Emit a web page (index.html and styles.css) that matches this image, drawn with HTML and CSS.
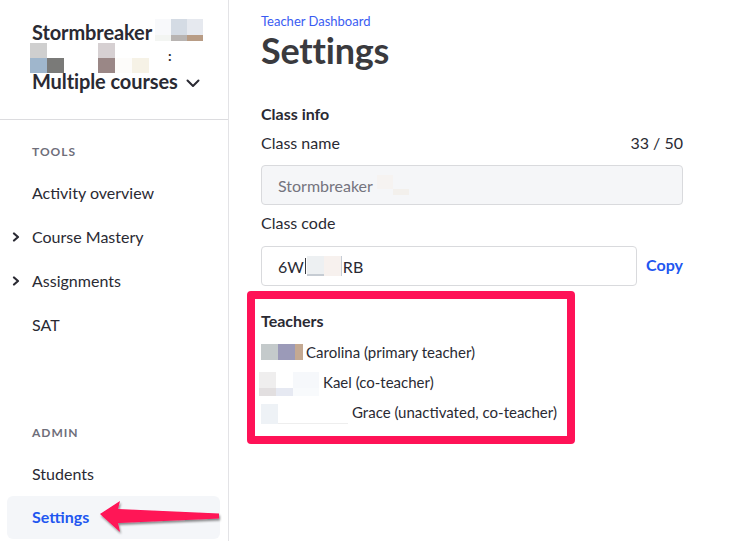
FILE: index.html
```html
<!DOCTYPE html>
<html>
<head>
<meta charset="utf-8">
<link rel="stylesheet" href="styles.css">
</head>
<body>
<div class="app">
  <aside class="sidebar">
    <div class="class-head">
      <div class="line line1">
        <span class="cname">Stormbreaker</span>
        <span class="mosaic m1">
          <i style="background:#f8f9fb"></i><i style="background:#d4dbe4"></i><i style="background:#e6e9ef"></i>
          <i class="s" style="background:#f3f5f2"></i><i class="s" style="background:#b8b4b2"></i><i class="s" style="background:#b89c85"></i>
        </span>
      </div>
      <div class="line line2">
        <span class="mosaic m2">
          <i style="background:#cfcfcf"></i><i></i><i></i><i></i><i style="background:#d6d0d2"></i><i></i><i></i>
          <i style="background:#9fb6cc"></i><i style="background:#7a7a78"></i><i></i><i></i><i style="background:#9a8786"></i><i style="background:#fdfcfa"></i><i style="background:#f6f2e6"></i>
        </span>
        <span class="colon">:</span>
      </div>
      <div class="line line3">
        <span class="cname">Multiple courses</span>
        <svg class="chev" width="14" height="9" viewBox="0 0 14 9"><path d="M1.5 1.5 L7 7 L12.5 1.5" fill="none" stroke="#2a2a33" stroke-width="2" stroke-linecap="round" stroke-linejoin="round"/></svg>
      </div>
    </div>
    <nav class="nav">
      <div class="section-label">TOOLS</div>
      <div class="nav-item">Activity overview</div>
      <div class="nav-item"><svg class="caret" width="8" height="10" viewBox="0 0 8 10"><path d="M2 1.5 L6 5 L2 8.5" fill="none" stroke="#2a2a33" stroke-width="2.2" stroke-linecap="round" stroke-linejoin="round"/></svg>Course Mastery</div>
      <div class="nav-item"><svg class="caret" width="8" height="10" viewBox="0 0 8 10"><path d="M2 1.5 L6 5 L2 8.5" fill="none" stroke="#2a2a33" stroke-width="2.2" stroke-linecap="round" stroke-linejoin="round"/></svg>Assignments</div>
      <div class="nav-item">SAT</div>
      <div class="spacer"></div>
      <div class="section-label">ADMIN</div>
      <div class="nav-item">Students</div>
      <div class="nav-item active">Settings</div>
    </nav>
    <svg class="arrow" width="130" height="44" viewBox="0 0 130 44">
      <defs>
        <filter id="sh" x="-20%" y="-50%" width="140%" height="200%">
          <feDropShadow dx="1" dy="2" stdDeviation="1.3" flood-color="#000" flood-opacity="0.45"/>
        </filter>
      </defs>
      <path d="M2 17 L22 4 L20 12 L121 16.5 L121 21.5 L20 26 L22 35 Z" fill="#ff1257" filter="url(#sh)"/>
    </svg>
  </aside>
  <main class="main">
    <a class="crumb">Teacher Dashboard</a>
    <h1 class="title">Settings</h1>
    <h2 class="sub">Class info</h2>
    <div class="field-row">
      <span>Class name</span><span>33 / 50</span>
    </div>
    <div class="input disabled">Stormbreaker <span class="blur b1"></span></div>
    <div class="label">Class code</div>
    <div class="code-row">
      <div class="input code">6W<span class="bar"></span><span class="blur b2"></span><span class="bar"></span>RB</div>
      <span class="copy">Copy</span>
    </div>
    <section class="teachers">
      <h3>Teachers</h3>
      <div class="t-row"><span class="mosaic t1"><i style="background:#c4cacb"></i><i style="background:#9b9ab8"></i><i class="n" style="background:#c4a992"></i></span>Carolina (primary teacher)</div>
      <div class="t-row"><span class="mosaic t2"><i style="background:#efeeee"></i><i></i><i style="background:#f6f8fb"></i><i style="background:#e2dfe0"></i><i style="background:#e6e9f2"></i><i style="background:#f8fafc"></i></span>Kael (co-teacher)</div>
      <div class="t-row"><span class="mosaic t3"><i style="background:#eef2f6"></i><i class="ul"></i></span>Grace (unactivated, co-teacher)</div>
    </section>
  </main>
</div>
</body>
</html>
```

FILE: styles.css
```css
* { box-sizing: border-box; }
html, body { margin: 0; padding: 0; background: #fff; }
body {
  font-family: Lato, "Open Sans", sans-serif;
  color: #2a2a33;
  width: 750px;
  height: 541px;
  overflow: hidden;
}
.app { display: flex; height: 541px; }

.sidebar {
  position: relative;
  width: 229px;
  flex: none;
  border-right: 1px solid #e3e3e6;
  display: flex;
  flex-direction: column;
}
.class-head {
  height: 120px;
  border-bottom: 1px solid #dcdcdf;
  padding: 19px 0 0 32px;
}
.line { display: flex; align-items: flex-start; }
.cname { font-size: 20px; font-weight: 700; line-height: 24px; color: #2a2a33; letter-spacing: -0.1px; }
.line1 .cname { margin-top: 1px; }
.mosaic { display: inline-grid; }
.mosaic i { display: block; }
.m1 { grid-template-columns: 16px 16px 16px; grid-template-rows: 16px 6px; margin-left: 3px; }
.line2 { height: 27px; margin-left: -2px; margin-top: -1px; }
.m2 { grid-template-columns: repeat(7, 17px); grid-template-rows: 15px 15px; }
.colon { font-size: 14px; font-weight: 700; margin-left: 19px; margin-top: 6px; line-height: 14px; }
.line3 { align-items: center; margin-top: -1px; }
.chev { margin-left: 8px; margin-top: 4px; }

.nav { display: flex; flex-direction: column; padding-top: 25px; }
.section-label {
  font-size: 12px;
  font-weight: 700;
  letter-spacing: 1px;
  color: #6e6e7a;
  padding-left: 32px;
  height: 14px;
  line-height: 14px;
  margin-bottom: 12px;
}
.nav-item {
  position: relative;
  font-size: 16px;
  line-height: 20px;
  padding: 12px 0 12px 25px;
  margin: 0 8px 0 7px;
  color: #2a2a33;
  border-radius: 6px;
}
.caret {
  position: absolute;
  left: 5px;
  top: 17px;
}
.spacer { height: 79px; }
.nav-item.active {
  background: #f4f6f9;
  color: #2156f0;
  font-weight: 700;
  padding-top: 11px;
  padding-bottom: 12px;
}
.arrow { position: absolute; left: 98px; top: 497px; }

.main { padding: 13px 0 0 32px; width: 454px; flex: none; }
.crumb { display: block; color: #3a5cf2; font-size: 13px; line-height: 16px; }
.title { font-size: 36px; font-weight: 700; color: #3a3a3e; margin: 0; line-height: 42px; letter-spacing: -0.2px; }
.sub { font-size: 16px; font-weight: 700; margin: 33px 0 0; line-height: 20px; }
.field-row { display: flex; justify-content: space-between; font-size: 16px; line-height: 20px; margin-top: 9px; }
.input {
  height: 40px;
  border: 1px solid #d9dadd;
  border-radius: 4px;
  display: flex;
  align-items: center;
  padding-left: 16px;
  font-size: 16px;
  margin-top: 12px;
}
.input.disabled { background: #f5f6f8; color: #74747e; }
.blur { display: inline-block; }
.b1 { width: 32px; height: 20px; margin-left: 4px; position: relative; }
.b1::before { content: ""; position: absolute; left: 0; top: 0; width: 16px; height: 14px; background: #f6f3f1; }
.b1::after { content: ""; position: absolute; left: 16px; bottom: 0; width: 16px; height: 6px; background: #f3f0ec; }
.label { font-size: 16px; line-height: 20px; margin-top: 8px; }
.code-row { display: flex; align-items: center; gap: 9px; margin-top: 13px; }
.code-row .input { margin-top: 0; width: 377px; color: #2a2a33; }
.copy { color: #2156f0; font-weight: 700; font-size: 16px; margin-top: -3px; }
.b2 { width: 34px; height: 20px; background: linear-gradient(90deg, #edf0f2 0 17px, #f7f1ee 17px); position: relative; }
.b2::after { content: ""; position: absolute; left: 0; bottom: 0; width: 17px; height: 2px; background: #c6ccd3; }
.bar { display: inline-block; width: 1px; height: 16px; background: #3a3a40; margin: 0 1px 0 1px; }
.bar + .b2 + .bar { background: #c6cdd6; height: 20px; margin: 0 1px 0 0; }

.teachers {
  margin: 5px 0 0 -14px;
  width: 328px;
  height: 153px;
  border: 8px solid #ff1257;
  border-radius: 4px;
  padding: 12px 0 0 6px;
}
.teachers h3 { font-size: 16px; font-weight: 700; margin: 0 0 6px; line-height: 20px; color: #2a2a33; }
.t-row { display: flex; align-items: center; font-size: 15px; line-height: 20px; height: 30px; margin-top: -6px; margin-bottom: 6px; }
.t-row:first-of-type { margin-top: 0; }
.t1 { grid-template-columns: 17px 17px 8px; grid-template-rows: 16px; margin-right: 3px; }
.t2 { grid-template-columns: 17px 17px 26px; grid-template-rows: 16px 8px; margin-left: -2px; margin-right: 4px; margin-top: 3px; }
.t3 { grid-template-columns: 17px 70px; grid-template-rows: 20px; margin-right: 4px; margin-top: 4px; }
.t3 .ul { border-bottom: 1px solid #eeeeee; }
```
